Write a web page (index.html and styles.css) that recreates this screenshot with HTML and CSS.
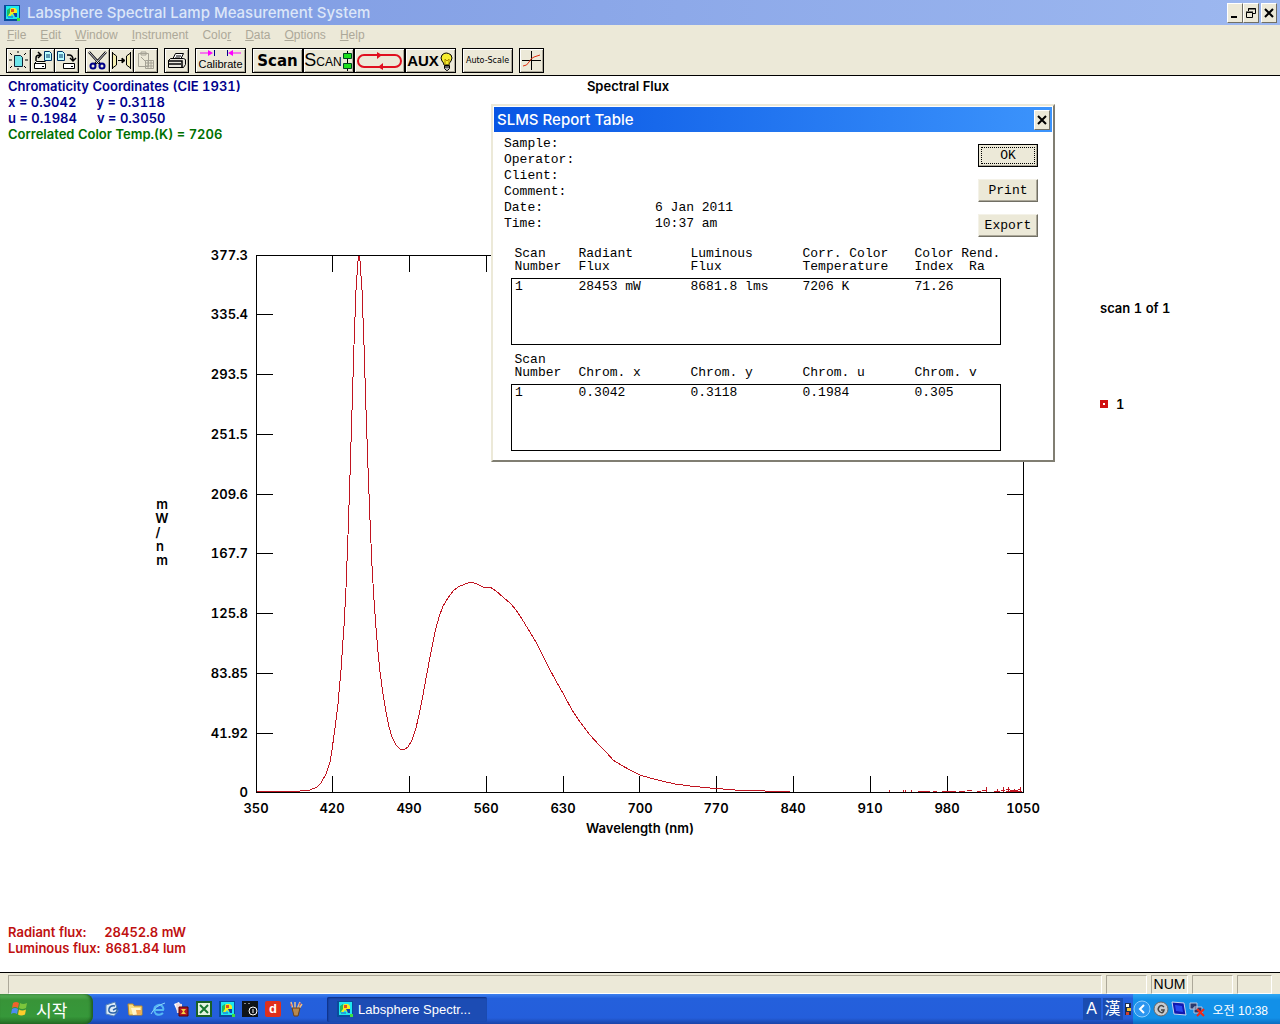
FILE: index.html
```html
<!DOCTYPE html>
<html lang="en">
<head>
<meta charset="utf-8">
<meta name="viewport" content="width=device-width, initial-scale=1">
<title>Labsphere Spectral Lamp Measurement System</title>
<link rel="stylesheet" href="styles.css">
</head>
<body>
<svg class="defs" aria-hidden="true">
  <symbol id="app-icon" viewBox="0 0 16 16">
    <rect width="16" height="16" fill="#0a4c9c"/>
    <rect width="13" height="13" x="2" y="1" fill="#1ee8ee"/>
    <path d="M4 9l3-6h4l2 2v4l-3 2-2-2-3 4z" fill="#f4ee20"/>
    <path d="M3 5l3-2v5l-3 4z" fill="#20b860"/>
    <path d="M7 4h3v3H7z" fill="#e05020"/>
    <path d="M9 8h4v4h-2z" fill="#1040b0"/>
    <path d="M4 11h5v2H4z" fill="#20a0e0"/>
    <path d="M13 13h3v3h-3z" fill="#40e040"/>
  </symbol>
</svg>

<header class="titlebar">
  <svg class="icon16" aria-hidden="true"><use href="#app-icon"/></svg>
  <h1>Labsphere Spectral Lamp Measurement System</h1>
  <div class="window-controls">
    <button class="winbtn" aria-label="Minimize"><svg viewBox="0 0 14 14"><path d="M3 10h6v2H3z"/></svg></button>
    <button class="winbtn" aria-label="Restore"><svg viewBox="0 0 14 14"><path d="M4.500 5V2.500h7v5H9M4 3h8" fill="none" stroke="#000"/><path d="M2.500 6.500h6v5h-6zM2 6h7" fill="none" stroke="#000"/></svg></button>
    <button class="winbtn apart" aria-label="Close"><svg viewBox="0 0 14 14"><path d="M3 3l8 8M11 3l-8 8" stroke="#000" stroke-width="2"/></svg></button>
  </div>
</header>

<nav class="menubar" aria-label="Main menu">
  <button disabled><u>F</u>ile</button>
  <button disabled><u>E</u>dit</button>
  <button disabled><u>W</u>indow</button>
  <button disabled><u>I</u>nstrument</button>
  <button disabled>Colo<u>r</u></button>
  <button disabled><u>D</u>ata</button>
  <button disabled><u>O</u>ptions</button>
  <button disabled><u>H</u>elp</button>
</nav>

<div class="toolbar" role="toolbar" aria-label="Tools">
  <div class="group">
    <button class="tool" aria-label="New"><svg viewBox="0 0 21 21"><path d="M6.500 5.500h6l2 2v9h-8z" fill="#6fe6ea" stroke="#123"/><path d="M2 3l2 2M10 1v2M18 3l-2 2M1 10h3M17 10h3M2 18l2-2M10 18v2M18 18l-2-2" stroke="#000" fill="none"/></svg></button>
    <button class="tool" aria-label="Open"><svg viewBox="0 0 21 21"><path d="M12.500 1.500h5l2 2v7h-7z" fill="#bff" stroke="#036"/><path d="M14 5h4M14 7h4" stroke="#036"/><path d="M4 11V8q0-3 4-3M6 2l3 3-3 3" fill="none" stroke="#000" stroke-width="1.500"/><path d="M2.500 13.500h11v5h-11zM2.500 13.500l2-2h9" fill="#fff" stroke="#000"/><path d="M10 16.500h2" stroke="#000"/></svg></button>
    <button class="tool" aria-label="Save"><svg viewBox="0 0 21 21"><path d="M1.500 1.500h5l2 2v7h-7z" fill="#bff" stroke="#036"/><path d="M3 5h4M3 7h4" stroke="#036"/><path d="M11 5h2q4 0 4 5M14 8l3 3 3-3" fill="none" stroke="#000" stroke-width="1.500"/><path d="M7.500 13.500h11v5h-11z" fill="#fff" stroke="#000"/><path d="M15 16.500h2" stroke="#000"/></svg></button>
  </div>
  <div class="group">
    <button class="tool" aria-label="Cut"><svg viewBox="0 0 21 21"><path d="M2 2l11 12M19 2L8 14" stroke="#000" stroke-width="2.500"/><path d="M2 2l10 11M19 2L9 13" stroke="#dde"/><circle cx="6" cy="16" r="2.500" fill="none" stroke="#008" stroke-width="2"/><circle cx="15" cy="16" r="2.500" fill="none" stroke="#008" stroke-width="2"/></svg></button>
    <button class="tool" aria-label="Merge"><svg viewBox="0 0 21 21"><path d="M1.500 2v17M1.500 3l4 3v9l-4 3M19.500 2v17M19.500 3l-4 3v9l4 3" fill="#f4eeb0" stroke="#000"/><path d="M7 10.500h5M11 8l3 2.500-3 2.500z" fill="#000" stroke="#000"/></svg></button>
    <button class="tool" aria-label="Paste" disabled><svg viewBox="0 0 21 21"><path d="M3.500 3.500h10v13h-10zM6 2h5v3H6zM10.500 10.500h8v8h-8zM10 13h8M10 16h8M13 10v8M16 10v8M6 7l5 5" fill="none" stroke="#a5a295"/></svg></button>
  </div>
  <div class="group">
    <button class="tool" aria-label="Print"><svg viewBox="0 0 21 21"><path d="M6.500 9.500l3-6h8l-3 6z" fill="#fff" stroke="#000"/><path d="M10 6h5M9 8h5" stroke="#000"/><path d="M2.500 10.500l2-2h13l2 1v5l-2 3h-15z" fill="#e8e6dc" stroke="#000"/><path d="M2 11h14v6M3 14h12" fill="none" stroke="#000" stroke-width="1.500"/></svg></button>
  </div>
  <div class="group">
    <button class="tool wide calibrate"><svg class="arrows" viewBox="0 0 47 6" aria-hidden="true"><path d="M3 3h10M35 3h9" stroke="#f0f"/><path d="M11 0l5 3-5 3zM36 0l-5 3 5 3z" fill="#f0f"/><path d="M17.500 0v6M30.500 0v6" stroke="#008"/></svg><span>Calibrate</span></button>
  </div>
  <div class="group spaced">
    <button class="tool wide scan">Scan</button>
    <button class="tool wide scan-multi"><span>S<small>CAN</small></span><svg viewBox="0 0 11 20" aria-hidden="true"><path d="M5.500 0v20" stroke="#000"/><path d="M1.500 2.500h8v5h-8zM1.500 12.500h8v5h-8z" fill="#1ee01e" stroke="#042"/></svg></button>
    <button class="tool wide" aria-label="Continuous scan"><svg class="loop" viewBox="0 0 47 20"><rect x="2" y="4" width="43" height="12" rx="6" fill="none" stroke="#e01020" stroke-width="2"/><path d="M21 1l5 3-5 4zM27 12l-5 4 5 3z" fill="#e01020"/></svg></button>
    <button class="tool wide aux"><span>AUX</span><svg viewBox="0 0 15 20" aria-hidden="true"><path d="M5 14q0-2-2-4-2-3 0-6 4-4 9 0 2 3 0 6-2 2-2 4z" fill="#f6ee30" stroke="#000"/><path d="M6 14V8l2 2 2-2v6" fill="none" stroke="#a80"/><path d="M5.500 14.500h5v3l-2 2h-1l-2-2zM6 16h4" fill="#bbb" stroke="#000"/></svg></button>
  </div>
  <div class="group">
    <button class="tool wide autoscale">Auto-Scale</button>
  </div>
  <div class="group">
    <button class="tool" aria-label="Axes"><svg viewBox="0 0 21 21"><path d="M1 10.500h19M10.500 1v19" stroke="#000"/><path d="M2 16q4 0 6-4t5-5 6-2" fill="none" stroke="#e03010"/></svg></button>
  </div>
</div>

<main class="workspace">
  <section class="readout">
    <p class="blue">Chromaticity Coordinates (CIE 1931)</p>
    <p class="blue pair"><span>x = 0.3042</span><span>y = 0.3118</span></p>
    <p class="blue pair"><span>u = 0.1984</span><span>v = 0.3050</span></p>
    <p class="green">Correlated Color Temp.(K) = 7206</p>
  </section>

  <svg class="chart" viewBox="0 76 1280 770" role="img" aria-label="Spectral flux against wavelength">
    <text class="mid" x="628" y="91">Spectral Flux</text>
    <path class="axis" d="M256.500 255.500H1023.500V792.500H256.500Z
      M332.500 255v17M409.500 255v17M486.500 255v17M563.500 255v17M639.500 255v17M716.500 255v17M793.500 255v17M870.500 255v17M947.500 255v17
      M332.500 776v17M409.500 776v17M486.500 776v17M563.500 776v17M639.500 776v17M716.500 776v17M793.500 776v17M870.500 776v17M947.500 776v17
      M256 314.500h17M256 374.500h17M256 434.500h17M256 494.500h17M256 553.500h17M256 613.500h17M256 673.500h17M256 733.500h17
      M1007 314.500h17M1007 374.500h17M1007 434.500h17M1007 494.500h17M1007 553.500h17M1007 613.500h17M1007 673.500h17M1007 733.500h17"/>
    <g class="end">
      <text x="248" y="260">377.3</text><text x="248" y="319">335.4</text><text x="248" y="379">293.5</text>
      <text x="248" y="439">251.5</text><text x="248" y="499">209.6</text><text x="248" y="558">167.7</text>
      <text x="248" y="618">125.8</text><text x="248" y="678">83.85</text><text x="248" y="738">41.92</text>
      <text x="248" y="797">0</text>
    </g>
    <g class="mid">
      <text x="256" y="813">350</text><text x="332" y="813">420</text><text x="409" y="813">490</text>
      <text x="486" y="813">560</text><text x="563" y="813">630</text><text x="640" y="813">700</text>
      <text x="716" y="813">770</text><text x="793" y="813">840</text><text x="870" y="813">910</text>
      <text x="947" y="813">980</text><text x="1023" y="813">1050</text>
      <text x="640" y="833">Wavelength (nm)</text>
      <text x="162" y="509">m</text><text x="162" y="523">W</text><text x="158" y="537">/</text>
      <text x="160" y="551">n</text><text x="162" y="565">m</text>
    </g>
    <path class="curve" d="M257 791L300 791 302 790.500 310 790 317 787 321 783 326 774 330 762 332 750 335 728 338 704 341 670 344 626 346 588 348 535 350 476 352 410 354 345 356 290 358 261 359 256 360 261 362 290 364 345 366 410 368 468 370 520 372 566 374 600 376 628 378 652 380 672 383 694 386 712 389 727 392 737 396 745 400 749 404 750 408 747 412 740 416 728 419 715 423 695 427 673 431 652 435 632 439 617 443 606 448 598 453 591 458 587 465 584 471 582 477 584 483 587 490 587 496 591 503 597 511 604 516 610 522 619 528 629 536 642 542 654 549 668 556 681 564 695 572 710 580 722 590 735 600 746 607 753 613 760 621 765 630 770 640 775 650 778 662 781 675 784 690 786 710 788 735 790 765 791 790 791"/>
    <path class="curve" d="M889.500 792v-2M903.500 792v-2M905.500 792v-2M911.500 792v-2M918 791h12M933 791h4M942 791h14M959 791h6M967 790.500h5M977 791h4M982 790.500h4M986.500 792v-5M994 791h6M997.500 792v-3M1001 790.500h4M1003.500 792v-5M1006 789.500h4M1006 791h16M1008.500 792v-5M1010 790.500h8M1014.500 792v-3M1018 789.500h3M1020.500 792v-5"/>
    <text x="1100" y="313">scan 1 of 1</text>
    <path d="M1100 400h8v8h-8z" fill="#d01010"/><path d="M1103 403h2v2h-2z" fill="#fff"/>
    <text x="1116" y="409">1</text>
  </svg>

  <dl class="totals">
    <dt>Radiant flux:</dt><dd>28452.8 mW</dd>
    <dt>Luminous flux:</dt><dd>8681.84 lum</dd>
  </dl>

  <section class="dialog" role="dialog" aria-labelledby="report-title">
    <header class="dialog-title">
      <h2 id="report-title">SLMS Report Table</h2>
      <button class="winbtn" aria-label="Close report"><svg viewBox="0 0 14 14"><path d="M3 3l8 8M11 3l-8 8" stroke="#000" stroke-width="2"/></svg></button>
    </header>
    <div class="dialog-top">
      <dl class="info">
        <dt>Sample:</dt><dd></dd>
        <dt>Operator:</dt><dd></dd>
        <dt>Client:</dt><dd></dd>
        <dt>Comment:</dt><dd></dd>
        <dt>Date:</dt><dd>6 Jan 2011</dd>
        <dt>Time:</dt><dd>10:37 am</dd>
      </dl>
      <div class="actions">
        <button class="default"><span>OK</span></button>
        <button>Print</button>
        <button>Export</button>
      </div>
    </div>
    <table>
      <thead><tr><th>Scan<br>Number</th><th>Radiant<br>Flux</th><th>Luminous<br>Flux</th><th>Corr. Color<br>Temperature</th><th>Color Rend.<br>Index&nbsp; Ra</th></tr></thead>
      <tbody><tr><td>1</td><td>28453 mW</td><td>8681.8 lms</td><td>7206 K</td><td>71.26</td></tr></tbody>
    </table>
    <table>
      <thead><tr><th>Scan<br>Number</th><th>Chrom. x</th><th>Chrom. y</th><th>Chrom. u</th><th>Chrom. v</th></tr></thead>
      <tbody><tr><td>1</td><td>0.3042</td><td>0.3118</td><td>0.1984</td><td>0.305</td></tr></tbody>
    </table>
  </section>
</main>

<div class="statusbar" role="status">
  <span class="pane grow"></span><span class="pane medium"></span><span class="pane num">NUM</span><span class="pane medium"></span><span class="pane small"></span>
</div>

<footer class="taskbar">
  <button class="start"><svg viewBox="0 0 20 18" aria-hidden="true"><path d="M3 3q3-2 6 0L8 8q-3-2-6 0z" fill="#f0622c"/><path d="M10 3q3 2 7 0l-1 5q-4 2-7 0z" fill="#7cc63c"/><path d="M2 9q3-2 6 0l-1 5q-3-2-6 0z" fill="#4c8cf4"/><path d="M9 9.500q3 2 7 0l-1 5q-4 2-7 0z" fill="#fccc2c"/></svg><span lang="ko">시작</span></button>
  <div class="quick">
    <button aria-label="Show desktop"><svg viewBox="0 0 16 16"><path d="M2 4l9-3 3 9-4 5-8-2z" fill="#dcebf8" stroke="#5a86b8"/><path d="M11 5Q6 4 5 8t4 4 4-5l-4 2" fill="none" stroke="#2a62a8" stroke-width="1.500"/></svg></button>
    <button aria-label="Folder"><svg viewBox="0 0 16 16"><path d="M1 3h5l1 2h8v9H2z" fill="#f8dc80" stroke="#c08a28"/><path d="M4 7h9l1 6-8 1z" fill="#fff4cc"/><path d="M9 9h5v4l-4 1z" fill="#f4a850"/></svg></button>
    <button aria-label="Internet Explorer"><svg viewBox="0 0 16 16"><path d="M13 12q-3 3-7 1-3-3-1-7 4-4 7-1 2 2 1 4H5" fill="none" stroke="#56b8f4" stroke-width="2"/><path d="M1 13Q5 5 15 2" fill="none" stroke="#8cd8fc"/></svg></button>
    <button aria-label="Cards"><svg viewBox="0 0 16 16"><path d="M1 3l5-2 4 8-5 3z" fill="#fff"/><path d="M3 2l6 1v9H4z" fill="#f4dada"/><path d="M6 6h9v9H6z" fill="#b01828" stroke="#500"/><path d="M8 8h5l-2 2.500 2 2.500H8l2-2.500z" fill="#f6d040"/></svg></button>
    <button aria-label="Excel"><svg viewBox="0 0 16 16"><path d="M1 1h14v14H1z" fill="#e4f4e0" stroke="#186028" stroke-width="2"/><path d="M4 4l8 8M12 4l-8 8" stroke="#187830" stroke-width="2"/></svg></button>
    <button aria-label="Labsphere"><svg><use href="#app-icon"/></svg></button>
    <button aria-label="Monitor"><svg viewBox="0 0 16 16"><path d="M0 0h16v16H0z" fill="#101418"/><circle cx="11" cy="10" r="4" fill="none" stroke="#fff"/><path d="M11 8v4M3 2v1M7 2v1" stroke="#fff"/></svg></button>
    <button class="dict">d</button>
    <button aria-label="Paint"><svg viewBox="0 0 16 16"><path d="M5 8L3 1M7 8V1M9 8l3-7M10 9l4-6" stroke="#f0c080" stroke-width="1.500"/><path d="M4 7h8l-2 8H6z" fill="#b8884c" stroke="#6a4018"/><path d="M3 3v2M12 2v2" stroke="#e44"/></svg></button>
  </div>
  <button class="task"><svg class="icon16" aria-hidden="true"><use href="#app-icon"/></svg><span>Labsphere Spectr...</span></button>
  <div class="langbar">
    <button>A</button><button lang="ko">漢</button>
    <svg viewBox="0 0 6 16" aria-hidden="true"><path d="M0 2h6v12H0z" fill="#1c2c50"/><path d="M1 3h3v3H1z" fill="#fff"/><path d="M2 7h4v3H2z" fill="#f0c030"/><path d="M1 11h3v3H1z" fill="#d04030"/></svg>
  </div>
  <div class="tray">
    <button class="expand" aria-label="Show hidden icons"><svg viewBox="0 0 18 18"><circle cx="9" cy="9" r="8" fill="#2c96f0" stroke="#8cccfc"/><path d="M11 5L7 9l4 4" fill="none" stroke="#fff" stroke-width="2"/></svg></button>
    <svg class="icon16" viewBox="0 0 16 16" aria-hidden="true"><circle cx="8" cy="8" r="7" fill="#c8ccd0" stroke="#666"/><path d="M11 6Q8 3 6 6t1 5 4-2H8" fill="none" stroke="#444" stroke-width="1.500"/></svg>
    <svg class="icon16" viewBox="0 0 16 16" aria-hidden="true"><path d="M1 1l12 1 2 12-12-1z" fill="#1018b0" stroke="#c8d4f0"/><path d="M4 4l7 1 1 6-7-1z" fill="#2848f0"/></svg>
    <svg class="icon16" viewBox="0 0 16 16" aria-hidden="true"><path d="M1 2h7v6H1zM5 6h8v6H5z" fill="#28386c" stroke="#b8c8e0"/><path d="M8 8l7 7M15 8l-7 7" stroke="#f02818" stroke-width="2"/></svg>
    <time lang="ko">오전 10:38</time>
  </div>
</footer>
</body>
</html>
```
FILE: styles.css
```css
* { box-sizing: border-box; }

body {
  margin: 0;
  min-height: 100vh;
  display: flex;
  flex-direction: column;
  background: #fff;
  color: #000;
  font-family: "Liberation Sans", "Noto Sans CJK KR", sans-serif;
  font-size: 13px;
}

h1, h2, p, dl, dd { margin: 0; }
button { font: inherit; color: inherit; padding: 0; border: 0; background: none; }
svg { display: block; }
.defs { position: absolute; width: 0; height: 0; }
.icon16 { width: 16px; height: 16px; flex: none; }

/* Title bar */
.titlebar {
  display: flex;
  align-items: center;
  gap: 7px;
  height: 25px;
  padding: 0 3px 0 4px;
  background: linear-gradient(90deg, #7b98e1, #9db8f0);
}
.titlebar h1 {
  flex: 1;
  font-family: Inter, sans-serif;
  font-size: 15px;
  font-weight: 500;
  line-height: 20px;
  color: #dce6f8;
}
.window-controls { display: flex; }
.winbtn {
  width: 16px;
  height: 20px;
  display: grid;
  place-items: center;
  background: #ece9d8;
  border: 1px solid;
  border-color: #fff #716f64 #716f64 #fff;
}
.winbtn svg { width: 14px; height: 14px; }
.winbtn.apart { margin-left: 2px; }

/* Menu bar */
.menubar {
  display: flex;
  gap: 14px;
  height: 20px;
  padding: 0 7px;
  background: #ece9d8;
  color: #aca899;
  font-size: 12px;
  line-height: 20px;
}

/* Toolbar */
.toolbar {
  display: flex;
  gap: 6px;
  height: 31px;
  padding: 3px 6px;
  background: #ece9d8;
  border-bottom: 1px solid #000;
}
.group { display: flex; }
.group .tool + .tool { margin-left: -1px; }
.group.spaced .tool + .tool { margin-left: 0; }
.tool {
  width: 25px;
  height: 25px;
  display: flex;
  align-items: center;
  justify-content: center;
  background: #ece9d8;
  border: 1px solid #000;
  box-shadow: inset 1px 1px #fff, inset -1px -1px #aca899;
}
.tool svg { width: 21px; height: 21px; }
.tool.wide { width: 51px; }
.tool .loop { width: 47px; height: 20px; }
.calibrate { flex-direction: column; font-size: 11px; line-height: 16px; }
.tool .arrows { width: 47px; height: 6px; }
.scan { font-family: "DejaVu Sans", sans-serif; font-size: 15px; font-weight: bold; }
.scan-multi { font-size: 18px; line-height: 20px; }
.scan-multi small { font-size: 12px; }
.tool.scan-multi svg { width: 11px; height: 20px; }
.aux { font-size: 15px; font-weight: bold; }
.tool.aux svg { width: 15px; height: 20px; }
.autoscale { font-family: "DejaVu Sans", sans-serif; font-size: 8px; }

/* Workspace: readouts share the grid with the chart */
.workspace {
  position: relative;
  flex: 1;
  display: grid;
  grid-template-rows: auto 1fr;
  font-family: Inter, sans-serif;
  font-weight: 600;
  font-variant-numeric: tabular-nums;
  line-height: 16px;
}
.readout { grid-area: 1 / 1; padding: 2px 8px; z-index: 1; }
.blue { color: #00008c; }
.green { color: #007000; }
.pair { display: flex; gap: 20px; }
.chart {
  grid-area: 1 / 1;
  width: 100%;
  height: auto;
  font-size: 13px;
}
.mid { text-anchor: middle; }
.end { text-anchor: end; }
.axis { fill: none; stroke: #000; shape-rendering: crispEdges; }
.curve { fill: none; stroke: #c01420; shape-rendering: crispEdges; }
.totals {
  grid-area: 2 / 1;
  align-self: end;
  justify-self: start;
  display: grid;
  grid-template-columns: auto auto;
  column-gap: 4px;
  padding: 0 8px 16px;
  color: #c01010;
}
.totals dd { text-align: right; }

/* Report window */
.dialog {
  position: absolute;
  left: 491px;
  top: 28px;
  z-index: 2;
  width: 564px;
  background: #fff;
  border: 2px solid;
  border-color: #ece9d8 #807e72 #807e72 #ece9d8;
  padding: 1px;
  font-family: "Liberation Mono", monospace;
  font-weight: normal;
}
.dialog-title {
  display: flex;
  align-items: center;
  justify-content: space-between;
  height: 25px;
  padding: 0 2px 0 3px;
  background: linear-gradient(90deg, #0856e4, #3c94fc);
  color: #fff;
  font-family: Inter, sans-serif;
}
.dialog-title h2 { font-size: 15px; font-weight: 500; }
.dialog-top {
  display: flex;
  justify-content: space-between;
  padding: 3px 14px 10px 10px;
}
.info {
  display: grid;
  grid-template-columns: 151px auto;
  grid-auto-rows: 16px;
  padding-top: 1px;
}
.actions {
  display: flex;
  flex-direction: column;
  gap: 12px;
  padding-top: 9px;
}
.actions button {
  width: 60px;
  height: 23px;
  background: #ece9d8;
  border: 1px solid;
  border-color: #f4f2e8 #716f64 #716f64 #f4f2e8;
  box-shadow: inset -1px -1px #aca899;
}
.actions .default { border-color: #000; padding: 2px; }
.default span { display: block; border: 1px dotted #000; line-height: 15px; }
.dialog table {
  width: 489px;
  margin: 0 0 8px 17px;
  border-collapse: collapse;
  table-layout: fixed;
}
.dialog th {
  padding: 0 0 5px 3px;
  font-weight: normal;
  text-align: left;
  vertical-align: bottom;
  line-height: 13px;
  white-space: nowrap;
  width: 112px;
}
.dialog th:first-child { width: 64px; }
.dialog th:last-child { width: 89px; }
.dialog tbody { border: 1px solid #000; }
.dialog td {
  height: 66px;
  padding: 0 0 0 3px;
  vertical-align: top;
}

/* Status bar */
.statusbar {
  display: flex;
  gap: 4px;
  height: 22px;
  padding: 2px 8px 0;
  background: #ece9d8;
  border-top: 1px solid #000;
}
.pane {
  border: 1px solid;
  border-color: #aca899 #fff #fff #aca899;
  line-height: 17px;
  text-align: center;
}
.grow { flex: 1; }
.medium { width: 41px; }
.num { width: 37px; font-size: 14px; }
.small { width: 35px; }

/* Taskbar */
.taskbar {
  display: flex;
  align-items: center;
  height: 30px;
  background: linear-gradient(#3c80f0, #2460dc 15%, #245edb 80%, #1a44a8);
  color: #fff;
}
.start {
  display: flex;
  align-items: center;
  gap: 6px;
  width: 93px;
  height: 30px;
  padding-left: 10px;
  background: linear-gradient(#5cb45c, #389438 20%, #36983a 75%, #267026);
  border-radius: 0 8px 8px 0;
  box-shadow: inset -2px 0 3px #205c20;
  font-size: 17px;
}
.start svg { width: 20px; height: 18px; }
.quick { display: flex; gap: 7px; padding-left: 11px; }
.quick button, .quick svg { width: 16px; height: 16px; }
.quick .dict {
  background: #e0301c;
  border-radius: 2px;
  font-weight: bold;
  line-height: 16px;
}
.task {
  display: flex;
  align-items: center;
  gap: 5px;
  width: 160px;
  height: 25px;
  margin-left: 23px;
  padding-left: 10px;
  background: #1c4cb4;
  border-radius: 2px;
  box-shadow: inset 1px 1px 2px #0c2c80;
}
.langbar {
  display: flex;
  align-items: center;
  gap: 2px;
  margin-left: auto;
  font-size: 16px;
}
.langbar button { width: 20px; height: 22px; line-height: 22px; background: #1a4cb0; }
.langbar button:first-child { width: 18px; }
.langbar svg { width: 6px; height: 16px; }
.tray {
  display: flex;
  align-items: center;
  gap: 2px;
  height: 30px;
  margin-left: 2px;
  padding-right: 12px;
  background: linear-gradient(#30a8f4, #1290e8 20%, #1290e8 80%, #0c6cc0);
  font-size: 12px;
}
.expand svg { width: 18px; height: 18px; }
.tray time { margin-left: 6px; }
```
